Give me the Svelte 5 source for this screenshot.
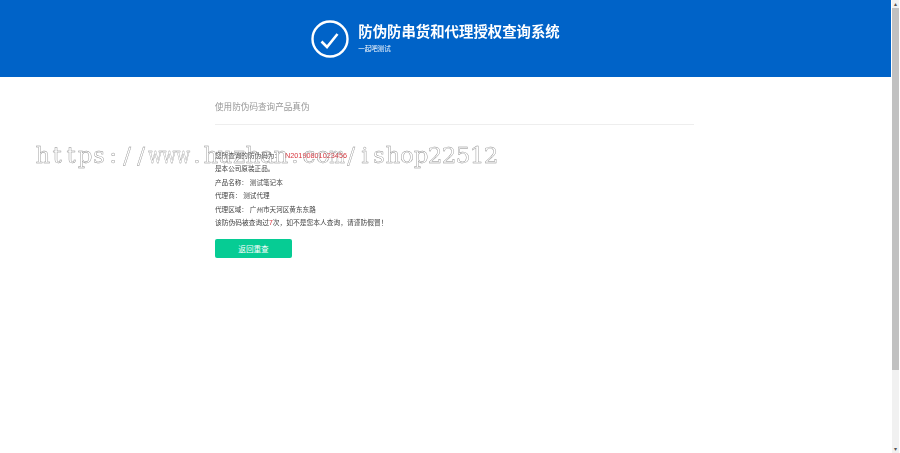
<script>
  const watermark = "https://www.huzhan.com/ishop22512".split("");
  const rows = [
    "产品名称\uFF1A 测试笔记本",
    "代理商\uFF1A 测试代理",
    "代理区域\uFF1A 广州市天河区黄东东路",
  ];
</script>

<div class="page">
  <div class="main">
    <header class="banner">
      <svg class="logo" viewBox="0 0 40 40" width="40" height="40">
        <circle cx="20" cy="20" r="17.5" fill="none" stroke="#fff" stroke-width="2.4" />
        <path d="M11.5 22.5 L17 28 L27.5 15" fill="none" stroke="#fff" stroke-width="2.6" />
      </svg>
      <div class="brand">
        <h1>防伪防串货和代理授权查询系统</h1>
        <p>一起吧测试</p>
      </div>
    </header>

    <section class="content">
      <h2>使用防伪码查询产品真伪</h2>
      <div class="result">
        <div class="row">您所查询的防伪码为&#xFF1A;<span class="red code">N20190801023456</span></div>
        <div class="row">是本公司原装正品&#x3002;</div>
        {#each rows as r}
          <div class="row">{r}</div>
        {/each}
        <div class="row notice">该防伪码被查询过<span class="red">7</span>次&#xFF0C;如不是您本人查询&#xFF0C;请谨防假冒&#xFF01;</div>
      </div>
      <button class="back">返回重查</button>
    </section>

    <div class="watermark">
      {#each watermark as ch}<span class:squeeze={ch === "w" || ch === "m"}>{ch}</span>{/each}
    </div>
  </div>

  <aside class="scrollbar">
    <div class="arrow">▴</div>
    <div class="thumb"></div>
    <div class="arrow">▾</div>
  </aside>
</div>

<style>
  :global(body) {
    margin: 0;
    background: #fff;
    font-family: "Liberation Sans", "Noto Sans CJK SC", sans-serif;
    overflow: hidden;
  }

  .page { display: flex; height: 453px; overflow: hidden; }
  .main { position: relative; flex: 1; min-width: 0; }

  .banner {
    height: 77px;
    background: #0063c8;
    display: flex;
    align-items: center;
    justify-content: center;
    gap: 8px;
    padding-right: 21px;
    box-sizing: border-box;
  }
  .brand { color: #fff; margin-top: -3px; filter: blur(0.3px); }
  h1 { margin: 0; font-size: 14.4px; line-height: 20px; font-weight: 700; }
  .brand p { margin: 3px 0 0; font-size: 6.5px; line-height: 8px; }

  .content { width: 479px; margin-left: 215px; }
  h2 {
    margin: 0;
    padding: 24px 0 11px;
    font-size: 8.6px;
    line-height: 12px;
    font-weight: 400;
    color: #999;
    border-bottom: 1px solid #eee;
    filter: blur(0.3px);
  }
  .result { padding-top: 24px; font-size: 6.6px; color: #444; filter: blur(0.25px); }
  .row { line-height: 13.4px; }
  .notice { font-size: 6.75px; }
  .red { color: #d9363e; }
  .code { font-size: 7.3px; margin-left: 4px; }

  .back {
    display: block;
    width: 77px;
    height: 19px;
    margin-top: 10px;
    padding: 0;
    border: 0;
    border-radius: 2px;
    background: #06cc94;
    color: #fff;
    font: inherit;
    font-size: 7.6px;
  }

  .watermark {
    position: absolute;
    left: 36px;
    top: 141px;
    display: flex;
    font-family: "DejaVu Serif", serif;
    font-size: 23px;
    line-height: 28px;
    color: transparent;
    -webkit-text-stroke: 0.4px #8a8a8a;
    filter: grayscale(1);
  }
  .watermark span { width: 14px; display: flex; justify-content: center; }
  .watermark .squeeze { transform: scaleX(0.72); }

  .scrollbar {
    width: 7px;
    margin: 0 1px;
    background: #f1f1f1;
    display: flex;
    flex-direction: column;
    color: #555;
  }
  .arrow { height: 8px; line-height: 8px; font-size: 6px; text-align: center; }
  .thumb { height: 362px; background: #c1c1c1; }
  .scrollbar .arrow:last-child { margin-top: auto; }
</style>
